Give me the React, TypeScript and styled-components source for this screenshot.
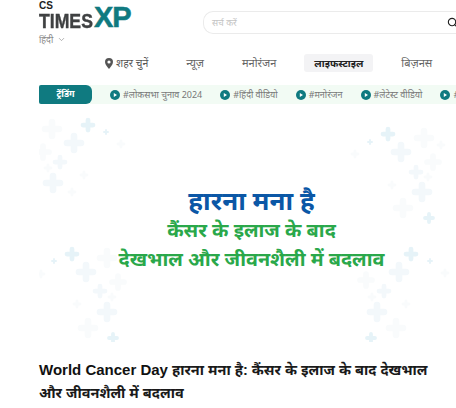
import React from "react";
import styled, { createGlobalStyle } from "styled-components";
import { Search, ChevronDown } from "lucide-react";

const hindi = `"Noto Sans", "Liberation Sans", sans-serif`;

const GlobalStyle = createGlobalStyle`
  html, body {
    margin: 0;
    padding: 0;
    background: #fff;
    overflow: hidden;
    font-family: "Liberation Sans", "Noto Sans", sans-serif;
  }
`;

const navItems = ["न्यूज़", "मनोरंजन", "लाइफस्टाइल", "बिज़नस"];
const tags = ["#लोकसभा चुनाव 2024", "#हिंदी वीडियो", "#मनोरंजन", "#लेटेस्ट वीडियो", "#वेब"];

// decorative plus marks on the hero, page x / y / arm length / colour
const strong = "#e6f3f8";
const mid = "#f3f8fb";
const faint = "#f9fbfc";
const crosses: [number, number, number, string][] = [
  [88, 125, 5, strong], [106, 132, 2, strong], [52, 129, 7, faint], [74, 143, 7, mid],
  [121, 144, 3, faint], [43, 152, 6, faint], [60, 162, 5, mid], [48, 168, 3, faint],
  [53, 183, 7, mid], [84, 175, 3, faint], [72, 192, 3, faint],
  [388, 134, 5, strong], [370, 142, 2, strong], [424, 138, 7, faint], [401, 152, 7, mid],
  [441, 145, 3, faint], [355, 154, 3, faint], [433, 162, 6, faint], [416, 172, 5, mid],
  [428, 177, 3, faint], [392, 185, 3, faint], [422, 192, 7, mid], [403, 208, 7, faint],
  [429, 218, 4, strong],
  [72, 254, 5, strong], [54, 261, 2, strong], [107, 258, 7, faint], [86, 272, 7, mid],
  [41, 274, 3, faint], [118, 282, 6, faint], [100, 291, 5, mid], [112, 297, 3, faint],
  [77, 304, 3, faint], [107, 312, 7, mid], [88, 328, 7, faint], [113, 338, 4, strong],
  [411, 254, 5, strong], [430, 261, 2, strong], [399, 272, 7, mid], [445, 273, 3, faint],
  [366, 280, 6, faint], [384, 291, 5, mid], [372, 297, 3, faint], [406, 304, 3, faint],
  [377, 312, 7, mid], [396, 328, 7, faint], [371, 338, 4, strong],
];

function App() {
  return (
    <Page>
      <GlobalStyle />
      <Header>
        <Brand>
          <Cs>CS</Cs>
          <Logo>
            <Times>TIMES</Times>
            <Xp>XP</Xp>
          </Logo>
          <Lang>
            हिंदी <ChevronDown size={9} color="#999" />
          </Lang>
        </Brand>
        <SearchBox>
          <SearchHint>सर्च करें</SearchHint>
          <SearchIcon size={11} color="#222" strokeWidth={2.5} />
        </SearchBox>
      </Header>
      <Nav>
        <City>
          <svg width="8" height="11" viewBox="0 0 8 11">
            <path
              fillRule="evenodd"
              d="M4 0a4 4 0 0 1 4 4c0 2.6-2.6 5-4 7-1.4-2-4-4.400-4-7a4 4 0 0 1 4-4zm0 2.400a1.600 1.600 0 1 0 0 3.200 1.600 1.600 0 0 0 0-3.200z"
              fill="#555"
            />
          </svg>
          शहर चुनें
        </City>
        {navItems.map((item) => (
          <NavItem key={item} $active={item === "लाइफस्टाइल"}>
            {item}
          </NavItem>
        ))}
      </Nav>
      <TrendBar>
        <TrendTab>ट्रेंडिंग</TrendTab>
        {tags.map((tag) => (
          <Tag key={tag}>
            <PlayIcon viewBox="0 0 10 10">
              <circle cx="5" cy="5" r="5" fill="#0f7a80" />
              <path d="M3.800 3 L7 5 L3.800 7 Z" fill="#fff" />
            </PlayIcon>
            {tag}
          </Tag>
        ))}
      </TrendBar>
      <Hero>
        <HeroPattern viewBox="39 110 417 232">
          {crosses.map(([x, y, r, c], i) => (
            <path
              key={i}
              d={`M${x - r} ${y}H${x + r}M${x} ${y - r}V${y + r}`}
              stroke={c}
              strokeWidth={r * 0.95}
              strokeLinecap="round"
            />
          ))}
        </HeroPattern>
        <HeroBlue>हारना मना है</HeroBlue>
        <HeroGreen>कैंसर के इलाज के बाद</HeroGreen>
        <HeroGreen>देखभाल और जीवनशैली में बदलाव</HeroGreen>
      </Hero>
      <Title>
        <Latin>World Cancer Day</Latin> हारना मना है: कैंसर के इलाज के बाद देखभाल और जीवनशैली में बदलाव
      </Title>
    </Page>
  );
}

export default App;

const Page = styled.div`
  width: 456px;
  height: 408px;
  padding-left: 39px;
  box-sizing: border-box;
  overflow: hidden;
`;

const Header = styled.div`
  display: flex;
  height: 54px;
`;

const Brand = styled.div`
  width: 164px;
  display: flex;
  flex-direction: column;
`;

const Cs = styled.div`
  font-size: 10px;
  font-weight: 700;
  line-height: 10px;
  margin-top: 1px;
  color: #222;
`;

const Logo = styled.div`
  display: flex;
  align-items: flex-end;
  height: 21px;
  margin-top: -4px;
`;

const Times = styled.span`
  font-size: 21px;
  font-weight: 700;
  line-height: 15px;
  color: #3f4142;
  -webkit-text-stroke: 0.4px #3f4142;
  transform: scaleX(0.84);
  transform-origin: left;
  width: 55px;
`;

const Xp = styled.span`
  font-size: 29px;
  font-weight: 700;
  line-height: 21px;
  letter-spacing: -1px;
  color: #0f7a80;
  -webkit-text-stroke: 0.5px #0f7a80;
`;

const Lang = styled.div`
  display: flex;
  align-items: center;
  gap: 4px;
  font-family: ${hindi};
  font-size: 9px;
  color: #888;
  margin-top: 5px;
`;

const SearchBox = styled.div`
  flex: 1;
  height: 23px;
  margin-top: 11px;
  box-sizing: border-box;
  border: 1.5px solid #ebebeb;
  border-right: none;
  border-radius: 10px 0 0 10px;
  display: flex;
  align-items: center;
  justify-content: space-between;
  padding-left: 8px;
  overflow: hidden;
`;

const SearchHint = styled.span`
  font-family: ${hindi};
  font-size: 9px;
  color: #c4c4c4;
`;

const SearchIcon = styled(Search)`
  flex: none;
  margin-right: -2px;
`;

const Nav = styled.div`
  display: flex;
  align-items: center;
  height: 18px;
  margin-left: 66px;
  gap: 18px;
  font-family: ${hindi};
  font-size: 11px;
  white-space: nowrap;
`;

const City = styled.div`
  display: flex;
  align-items: center;
  gap: 3px;
  color: #555;
  font-size: 10.5px;
  margin-right: 10px;
`;

const NavItem = styled.div<{ $active?: boolean }>`
  color: ${(p) => (p.$active ? "#222" : "#666")};
  font-weight: ${(p) => (p.$active ? 700 : 400)};
  font-size: ${(p) => (p.$active ? "10px" : "11px")};
  background: ${(p) => (p.$active ? "#f3f3f5" : "transparent")};
  padding: 0 10px;
  line-height: 18px;
  border-radius: 3px;
`;

const TrendBar = styled.div`
  display: flex;
  align-items: center;
  height: 19px;
  margin-top: 13px;
  background: #f2fbf4;
  font-family: ${hindi};
  white-space: nowrap;
  overflow: hidden;
`;

const TrendTab = styled.div`
  width: 53px;
  height: 19px;
  flex: none;
  background: #0f7a80;
  color: #fff;
  font-size: 9px;
  font-weight: 700;
  text-align: center;
  line-height: 18px;
  border-radius: 2px 6px 6px 2px;
  margin-right: 18px;
`;

const Tag = styled.div`
  display: flex;
  align-items: center;
  gap: 3px;
  flex: none;
  font-size: 9px;
  color: #777;
  margin-right: 18px;
`;

const PlayIcon = styled.svg`
  width: 10px;
  height: 10px;
`;

const Hero = styled.div`
  position: relative;
  margin-top: 6px;
  height: 232px;
  display: flex;
  flex-direction: column;
  align-items: center;
  padding: 75px 0 0 8px;
  box-sizing: border-box;
`;

const HeroPattern = styled.svg`
  position: absolute;
  inset: 0;
  width: 417px;
  height: 232px;
  filter: blur(0.6px);
`;

const HeroBlue = styled.div`
  position: relative;
  font-family: ${hindi};
  font-size: 26px;
  font-weight: 700;
  line-height: 30px;
  color: #0b57a6;
`;

const HeroGreen = styled.div`
  position: relative;
  font-family: ${hindi};
  font-size: 19.8px;
  font-weight: 700;
  line-height: 29px;
  color: #2aa84a;
`;

const Title = styled.h1`
  margin: 17px 0 0;
  font-size: 14.5px;
  font-weight: 700;
  line-height: 23px;
  color: #1a1a1a;
  width: 400px;
`;

const Latin = styled.span`
  font-size: 15px;
  font-weight: 700;
  line-height: 20px;
  color: #111;
`;
